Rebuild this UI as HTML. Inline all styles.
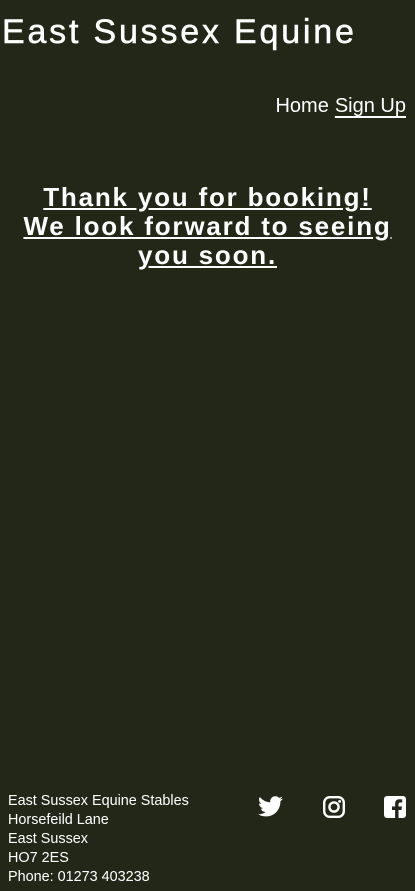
<!DOCTYPE html>
<html><head><meta charset="utf-8"><style>
body{margin:0;width:415px;height:891px;background:#222718;color:#fff;font-family:"Liberation Sans",sans-serif;position:relative;overflow:hidden}
h1{position:absolute;left:2px;top:12px;margin:0;font-weight:normal;font-size:34px;letter-spacing:2.8px;line-height:40px;-webkit-text-stroke:0.5px #fff}
nav{position:absolute;right:9px;top:94px;font-size:20px;line-height:24px}
nav span{margin-left:6px}
nav .u{text-decoration:underline;text-underline-offset:4px}
h2{position:absolute;left:0;width:415px;top:183px;margin:0;text-align:center;font-size:26px;line-height:29px;letter-spacing:1.8px;text-decoration:underline}
.f{position:absolute;left:8px;top:792px;font-size:14.4px;line-height:19px}
svg{position:absolute;fill:#fff}
</style></head><body>
<h1>East Sussex Equine</h1>
<nav><span>Home</span><span class="u">Sign Up</span></nav>
<h2>Thank you for booking!<br>We look forward to seeing<br>you soon.</h2>
<div class="f">East Sussex Equine Stables<br>Horsefeild Lane<br>East Sussex<br>HO7 2ES<br>Phone: 01273 403238</div>
<svg style="left:258px;top:796px" width="25" height="21" viewBox="0 0 24 20"><path d="M24 2.4a9.8 9.8 0 0 1-2.8.8A4.9 4.9 0 0 0 23.3.5a9.9 9.9 0 0 1-3.1 1.2A4.9 4.9 0 0 0 11.8 6 14 14 0 0 1 1.7.9a4.9 4.9 0 0 0 1.5 6.6A4.9 4.9 0 0 1 1 6.9 4.9 4.9 0 0 0 4.9 11.8a4.9 4.9 0 0 1-2.2.1 4.9 4.9 0 0 0 4.6 3.4A9.9 9.9 0 0 1 0 17.3 14 14 0 0 0 7.5 19.5c9 0 14-7.5 14-14v-.6A10 10 0 0 0 24 2.4z"/></svg>
<svg style="left:323px;top:796px" width="22" height="22" viewBox="0 0 22 22"><rect x="1.2" y="1.2" width="19.6" height="19.6" rx="5.5" fill="none" stroke="#fff" stroke-width="2.4"/><circle cx="11" cy="11" r="4.6" fill="none" stroke="#fff" stroke-width="2.4"/><circle cx="16.6" cy="5.4" r="1.4"/></svg>
<svg style="left:384px;top:796px" width="22" height="22" viewBox="0 0 22 22"><path d="M3 0h16a3 3 0 0 1 3 3v16a3 3 0 0 1-3 3h-4.5v-8h3l.5-3.5h-3.5V8.3c0-1 .4-1.8 1.9-1.8h1.8V3.4c-.4 0-1.5-.2-2.7-.2-2.7 0-4.4 1.6-4.4 4.5v2.8H8V14h3.1v8H3a3 3 0 0 1-3-3V3a3 3 0 0 1 3-3z"/></svg>
</body></html>
